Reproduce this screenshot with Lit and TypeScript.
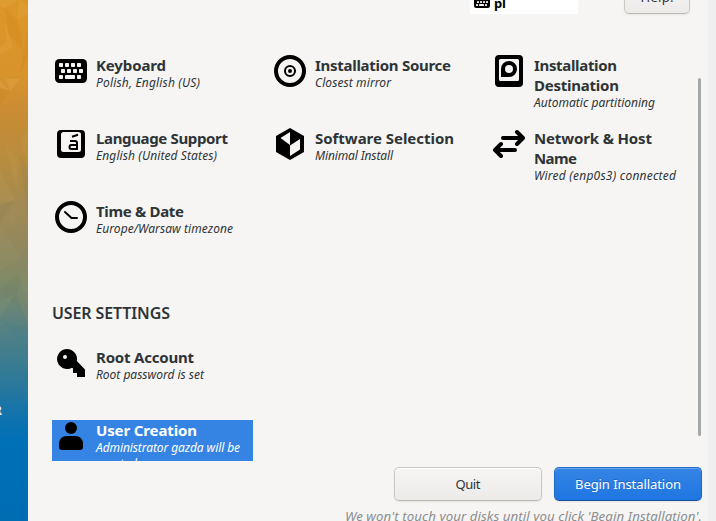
import { LitElement, html, css, svg } from "lit";
import { customElement, property } from "lit/decorators.js";

// A line of text whose tracking is adjusted to fill a given width.
@customElement("fit-text")
class FitText extends LitElement {
  @property() text = "";
  @property({ type: Number }) width = 0;
  static styles = css`
    :host { display: block; white-space: nowrap; }
    .run { display: inline-block; white-space: pre; }
  `;
  render() { return html`<span class="run">${this.text}</span>`; }
  updated() {
    const run = this.renderRoot.querySelector(".run") as HTMLElement;
    run.style.letterSpacing = "0";
    if (!this.width || this.text.length < 2) return;
    const natural = run.getBoundingClientRect().width;
    const gap = (this.width - natural) / (this.text.length - 1);
    run.style.letterSpacing = gap + "px";
    run.style.marginRight = -gap + "px";
  }
}

const keyboard = svg`
  <rect y="4" width="32" height="24" rx="4.5"/>
  <g fill="#f6f5f4">
    <rect x="4" y="8" width="4" height="4" rx=".8"/><rect x="10" y="8" width="4" height="4" rx=".8"/><rect x="16" y="8" width="4" height="4" rx=".8"/><rect x="22" y="8" width="4" height="4" rx=".8"/>
    <rect x="6" y="14" width="4" height="4" rx=".8"/><rect x="12" y="14" width="4" height="4" rx=".8"/><rect x="18" y="14" width="4" height="4" rx=".8"/><rect x="24" y="14" width="4" height="4" rx=".8"/>
    <rect x="4" y="20" width="4" height="4" rx=".8"/><rect x="10" y="20" width="10" height="4" rx=".8"/><rect x="22" y="20" width="4" height="4" rx=".8"/>
  </g>`;

const icons: Record<string, unknown> = {
  keyboard,
  source: svg`<circle cx="16" cy="16" r="14" fill="none" stroke="#000" stroke-width="4"/><circle cx="16" cy="16" r="5" fill="none" stroke="#000" stroke-width="2"/><circle cx="16" cy="16" r="2"/>`,
  disk: svg`<path fill-rule="evenodd" d="M6 0h20a4 4 0 0 1 4 4v24a4 4 0 0 1-4 4H6a4 4 0 0 1-4-4V4a4 4 0 0 1 4-4zM7.500 4A1.500 1.500 0 0 0 6 5.500v19A1.500 1.500 0 0 0 7.500 26h17a1.500 1.500 0 0 0 1.500-1.500v-19A1.500 1.500 0 0 0 24.500 4z"/><path fill-rule="evenodd" d="M16 6a8 8 0 1 1 0 16H8v-8a8 8 0 0 1 8-8zM16 10a4 4 0 1 0 0 8 4 4 0 0 0 0-8z"/>`,
  language: svg`<path fill-rule="evenodd" d="M6 2h20a4 4 0 0 1 4 4v20a4 4 0 0 1-4 4H6a4 4 0 0 1-4-4V6a4 4 0 0 1 4-4zM8.500 4A2.500 2.500 0 0 0 6 6.500v15A2.500 2.500 0 0 0 8.500 24h15a2.500 2.500 0 0 0 2.500-2.500v-15A2.500 2.500 0 0 0 23.500 4z"/><path fill="none" stroke="#000" stroke-width="2" d="M17 8.800l6-2M15 13h5q2 0 2 2v7M22 17h-5.500q-2 0-2 2t2 2H22"/>`,
  software: svg`<path d="M16 0l14 8v16l-14 8L2 24V8z"/><path fill="#f6f5f4" d="M16 4v13L6.500 10zM16 17.500L26 11v10.500L16 28z"/>`,
  network: svg`<path fill="none" stroke="#000" stroke-width="4" stroke-linecap="round" stroke-linejoin="round" d="M10 10h19M24 4l6 6-6 6M22 22H3M8 16l-6 6 6 6"/>`,
  clock: svg`<circle cx="16" cy="16" r="14" fill="none" stroke="#000" stroke-width="4"/><path fill="none" stroke="#000" stroke-width="2" stroke-linecap="round" d="M10 11l6.500 6H22"/>`,
  key: svg`<path fill-rule="evenodd" d="M12 2a10 10 0 0 1 9.800 12L30 22.500V30h-8v-4h-4v-4.500l-1-.8A10 10 0 1 1 12 2zM10 8a2 2 0 1 0 0 4 2 2 0 0 0 0-4z"/>`,
  user: svg`<circle cx="16" cy="6" r="6"/><path d="M12 14h8c5 0 8 3.500 8 8v3q0 3-3 3H7q-3 0-3-3v-3c0-4.500 3-8 8-8z"/>`,
};

type Line = [string, number];
interface Spoke { icon: string; title: Line[]; status: Line[]; selected?: boolean; }

@customElement("spoke-item")
class SpokeItem extends LitElement {
  @property({ attribute: false }) spoke!: Spoke;
  static styles = css`
    :host { display: block; }
    .spoke { display: flex; gap: 9px; padding-left: 3px; height: 41px; color: #2e3436; }
    .selected { background: #3584e4; color: #fff; overflow: hidden; }
    svg { flex: none; width: 32px; height: 32px; display: block; }
    .selected svg { margin-top: 2px; }
    .title { font: 700 15px/20px "Noto Sans", sans-serif; }
    .status { font: italic 12px/16px "Noto Sans", sans-serif; }
  `;
  render() {
    const s = this.spoke;
    return html`<div class="spoke ${s.selected ? "selected" : ""}">
      <svg viewBox="0 0 32 32">${icons[s.icon]}</svg>
      <div>
        ${s.title.map(([t, w]) => html`<fit-text class="title" .text=${t} .width=${w}></fit-text>`)}
        ${s.status.map(([t, w]) => html`<fit-text class="status" .text=${t} .width=${w}></fit-text>`)}
      </div></div>`;
  }
}

const system: Spoke[] = [
  { icon: "keyboard", title: [["Keyboard", 70]], status: [["Polish, English (US)", 104]] },
  { icon: "source", title: [["Installation Source", 136]], status: [["Closest mirror", 76]] },
  { icon: "disk", title: [["Installation", 83], ["Destination", 85]], status: [["Automatic partitioning", 121]] },
  { icon: "language", title: [["Language Support", 132]], status: [["English (United States)", 121]] },
  { icon: "software", title: [["Software Selection", 139]], status: [["Minimal Install", 78]] },
  { icon: "network", title: [["Network & Host", 118], ["Name", 43]], status: [["Wired (enp0s3) connected", 142]] },
  { icon: "clock", title: [["Time & Date", 88]], status: [["Europe/Warsaw timezone", 137]] },
];
const user: Spoke[] = [
  { icon: "key", title: [["Root Account", 98]], status: [["Root password is set", 108]] },
  { icon: "user", selected: true, title: [["User Creation", 101]], status: [["Administrator gazda will be", 144], ["created", 41]] },
];

@customElement("app-root")
class AppRoot extends LitElement {
  static styles = css`
    :host { display: block; width: 716px; height: 521px; overflow: hidden; font-family: "Noto Sans", sans-serif; }
    .window { display: grid; grid-template-columns: 28px 680px 8px; height: 521px; }
    .side { position: relative; overflow: hidden; background: linear-gradient(#dc9628 0, #d8932b 75px, #ca8c34 112px, #b78c3d 160px, #a58a51 200px, #92885e 245px, #818a66 278px, #6b8676 305px, #508086 335px, #357b94 370px, #1674a9 410px, #0070b7 440px, #006db3 521px); }
    .facets { display: block; width: 28px; height: 440px; opacity: .55; }
    .brand { position: absolute; left: -6px; top: 403px; color: #e5eef5; font: 700 12px/16px "Noto Sans", sans-serif; }
    .edge { background: #efefef; }
    .main { background: #f6f5f4; height: 521px; overflow: hidden; display: flex; flex-direction: column; }
    .top { height: 55px; flex: none; display: flex; justify-content: flex-end; align-items: flex-start; padding-right: 18px; gap: 46px; }
    .layout { width: 108px; height: 14px; background: #fff; display: flex; gap: 4px; padding-left: 4px; box-sizing: border-box; overflow: hidden; }
    .layout svg { flex: none; width: 16px; height: 16px; margin-top: -6px; }
    .layout fit-text { font: 700 13px/16px "Noto Sans", sans-serif; color: #000; margin-top: -5px; }
    .btn { box-sizing: border-box; height: 34px; border: 1px solid #cdc7c2; border-bottom-color: #bfb8b1; border-radius: 5px; background: linear-gradient(#f6f5f4, #edebe9); box-shadow: inset 0 1px #fff, 0 1px 2px #00000012; color: #2e3436; display: flex; align-items: center; justify-content: center; font-size: 13px; line-height: 18px; }
    .help { width: 66px; margin-top: -20px; }
    .scroll { display: flex; height: 406px; flex: none; padding-left: 24px; }
    .content { width: 646px; height: 406px; overflow: hidden; }
    .grid { display: grid; grid-template-columns: repeat(3, 201px); grid-auto-rows: 73px; column-gap: 18px; }
    .heading { font-weight: 600; font-size: 16px; line-height: 20px; color: #2e3436; margin: 29px 0 24px; }
    .bar { width: 3px; height: 358px; border-radius: 2px; background: #a4a7a7; margin-top: 23px; }
    .actions { display: flex; justify-content: flex-end; gap: 12px; padding: 6px 6px 0; }
    .actions .btn { width: 148px; }
    .primary { border-color: #1b6acb; border-bottom-color: #15539e; background: linear-gradient(#3584e4, #1f76e1); color: #fff; box-shadow: inset 0 1px #6aa4eb, 0 1px 2px #00000012; text-shadow: 0 -1px #15539e99; }
    .note { align-self: flex-end; margin: 6px 6px 0 0; font: italic 13.300px/18px "Noto Sans", sans-serif; color: #8b8e8f; }
  `;
  render() {
    return html`<div class="window">
      <div class="side">
        <svg class="facets" viewBox="0 0 28 440">
          <path fill="#ecb04e" opacity=".45" d="M0 0h19L5 8l-5-2zM19 0l9 6v8L17 20zM0 46l7-4-3-22 9 27-13 8z"/>
          <path fill="#c97c12" opacity=".3" d="M5 8l12 12 7 33L9 34zM0 83l10 8-10 13zM28 28v30l-8 15z"/>
          <path fill="#edc070" opacity=".4" d="M20 79L10 91 6 79zM0 81l10 10L0 88z"/>
          <path fill="#c4a45a" opacity=".35" d="M0 170l15 30-15 3zM5 145l13 15-1 30zM28 130v35l-7-25z"/>
          <path fill="#6e7955" opacity=".25" d="M15 201l-15 4v18zM0 290l17-15L28 300v20zM20 155l8 15v50z"/>
          <path fill="#a2a071" opacity=".25" d="M2 218l12-4 1 12zM17 293l11-28v60L16 292 0 318v-17zM0 225l22 33-22 12z"/>
          <path fill="#338099" opacity=".22" d="M0 320l28 9v22zM0 360l12 22-12 12z"/>
        </svg>
        <div class="brand">R</div>
      </div>
      <div class="main">
        <div class="top">
          <div class="layout"><svg viewBox="0 0 32 32">${keyboard}</svg><fit-text .text=${"pl"} .width=${12}></fit-text></div>
          <div class="btn help"><fit-text .text=${"Help!"} .width=${33}></fit-text></div>
        </div>
        <div class="scroll">
          <div class="content">
            <div class="grid">${system.map((s) => html`<spoke-item .spoke=${s}></spoke-item>`)}</div>
            <fit-text class="heading" .text=${"USER SETTINGS"} .width=${118}></fit-text>
            <div class="grid">${user.map((s, i) => html`<spoke-item style="grid-column:1;grid-row:${i + 1}" .spoke=${s}></spoke-item>`)}</div>
          </div>
          <div class="bar"></div>
        </div>
        <div class="actions">
          <div class="btn"><fit-text .text=${"Quit"} .width=${25}></fit-text></div>
          <div class="btn primary"><fit-text .text=${"Begin Installation"} .width=${106}></fit-text></div>
        </div>
        <fit-text class="note" .text=${"We won't touch your disks until you click 'Begin Installation'."} .width=${357}></fit-text>
      </div>
      <div class="edge"></div>
    </div>`;
  }
}
